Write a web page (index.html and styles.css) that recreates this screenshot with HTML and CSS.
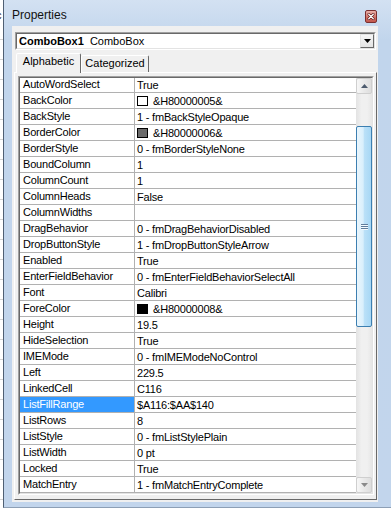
FILE: index.html
```html
<!DOCTYPE html>
<html lang="en">
<head>
    <meta charset="UTF-8">
    <title>Properties</title>
    <link rel="stylesheet" href="styles.css">
</head>
<body>
    <div class="desktop">
        <div class="sheet"><span class="sheet-char">c</span></div>

        <div class="window">
            <div class="titlebar">
                <span class="title">Properties</span>
                <span class="close">
                    <svg width="11" height="11" viewBox="0 0 11 11">
                        <path d="M3 3 L8 8 M8 3 L3 8" stroke="#5a1b1b" stroke-width="2.8" stroke-linecap="round"/>
                        <path d="M3 3 L8 8 M8 3 L3 8" stroke="#fff" stroke-width="1.4" stroke-linecap="round"/>
                    </svg>
                </span>
            </div>

            <div class="client">
                <div class="combo">
                    <div class="combo-field">
                        <span class="combo-text"><b>ComboBox1</b>&nbsp; ComboBox</span>
                        <span class="combo-btn">
                            <svg width="7" height="4" viewBox="0 0 7 4"><path d="M0 0 H7 L3.5 4 Z" fill="#000"/></svg>
                        </span>
                    </div>
                </div>

                <div class="tabs">
                    <div class="tab active">Alphabetic</div>
                    <div class="tab">Categorized</div>
                </div>

                <div class="tab-page">
                    <div class="grid">
                        <div class="grid-inner">
                            <div class="rows">
                                <div class="row-list">
                                    <div class="row"><div class="name">AutoWordSelect</div><div class="value">True</div></div>
                                    <div class="row"><div class="name">BackColor</div><div class="value"><span class="swatch swatch-white"></span>&amp;H80000005&amp;</div></div>
                                    <div class="row"><div class="name">BackStyle</div><div class="value">1 - fmBackStyleOpaque</div></div>
                                    <div class="row"><div class="name">BorderColor</div><div class="value"><span class="swatch swatch-gray"></span>&amp;H80000006&amp;</div></div>
                                    <div class="row"><div class="name">BorderStyle</div><div class="value">0 - fmBorderStyleNone</div></div>
                                    <div class="row"><div class="name">BoundColumn</div><div class="value">1</div></div>
                                    <div class="row"><div class="name">ColumnCount</div><div class="value">1</div></div>
                                    <div class="row"><div class="name">ColumnHeads</div><div class="value">False</div></div>
                                    <div class="row"><div class="name">ColumnWidths</div><div class="value"></div></div>
                                    <div class="row"><div class="name">DragBehavior</div><div class="value">0 - fmDragBehaviorDisabled</div></div>
                                    <div class="row"><div class="name">DropButtonStyle</div><div class="value">1 - fmDropButtonStyleArrow</div></div>
                                    <div class="row"><div class="name">Enabled</div><div class="value">True</div></div>
                                    <div class="row"><div class="name">EnterFieldBehavior</div><div class="value">0 - fmEnterFieldBehaviorSelectAll</div></div>
                                    <div class="row"><div class="name">Font</div><div class="value">Calibri</div></div>
                                    <div class="row"><div class="name">ForeColor</div><div class="value"><span class="swatch swatch-black"></span>&amp;H80000008&amp;</div></div>
                                    <div class="row"><div class="name">Height</div><div class="value">19.5</div></div>
                                    <div class="row"><div class="name">HideSelection</div><div class="value">True</div></div>
                                    <div class="row"><div class="name">IMEMode</div><div class="value">0 - fmIMEModeNoControl</div></div>
                                    <div class="row"><div class="name">Left</div><div class="value">229.5</div></div>
                                    <div class="row"><div class="name">LinkedCell</div><div class="value">C116</div></div>
                                    <div class="row"><div class="name selected">ListFillRange</div><div class="value">$A116:$AA$140</div></div>
                                    <div class="row"><div class="name">ListRows</div><div class="value">8</div></div>
                                    <div class="row"><div class="name">ListStyle</div><div class="value">0 - fmListStylePlain</div></div>
                                    <div class="row"><div class="name">ListWidth</div><div class="value">0 pt</div></div>
                                    <div class="row"><div class="name">Locked</div><div class="value">True</div></div>
                                    <div class="row"><div class="name">MatchEntry</div><div class="value">1 - fmMatchEntryComplete</div></div>
                                </div>
                            </div>

                            <div class="scrollbar">
                                <div class="sb-btn">
                                    <svg width="7" height="4" viewBox="0 0 7 4"><path d="M0 4 L3.5 0 L7 4 Z" fill="#4d5b6e"/></svg>
                                </div>
                                <div class="sb-gap"></div>
                                <div class="sb-thumb">
                                    <svg width="7" height="6" viewBox="0 0 7 6">
                                        <path d="M0 0.5 H7 M0 2.5 H7 M0 4.5 H7" stroke="#5f7d9c" stroke-width="1"/>
                                        <path d="M0 1.5 H7 M0 3.5 H7 M0 5.5 H7" stroke="#f4fbff" stroke-width="1"/>
                                    </svg>
                                </div>
                                <div class="sb-track"></div>
                                <div class="sb-btn">
                                    <svg width="7" height="4" viewBox="0 0 7 4"><path d="M0 0 H7 L3.5 4 Z" fill="#8a8a8a"/></svg>
                                </div>
                            </div>
                        </div>
                    </div>
                </div>
            </div>
        </div>
    </div>
</body>
</html>
```

FILE: styles.css
```css
/* Ventana de propiedades (estilo Windows 7 básico) */
:root {
    --frame-color: #c2d5ec;
    --face-color: #f0f0f0;
    --shadow-color: #a0a0a0;
    --dark-shadow: #696969;
    --light-color: #e3e3e3;
    --grid-line: #b1b1b1;
    --select-color: #3399ff;
}

* {
    margin: 0;
    padding: 0;
    box-sizing: border-box;
}

body {
    width: 391px;
    height: 512px;
    overflow: hidden;
    background-color: #ffffff;
    color: #000;
    font-family: "Liberation Sans", Arial, sans-serif;
    font-size: 11px;
}

.desktop {
    display: flex;
    height: 508px;
}

/* trozo de la hoja de Excel detrás */
.sheet {
    width: 3px;
    flex: none;
    overflow: hidden;
    background: repeating-linear-gradient(to bottom, #fff 0, #fff 19px, #d4d4d4 19px, #d4d4d4 20px);
    line-height: 30px;
}

.sheet-char {
    display: block;
    margin-left: -4px;
    background-color: #fff;
    line-height: 24px;
    padding-top: 3px;
}

.window {
    flex: 1;
    display: flex;
    flex-direction: column;
    border-left: 1px solid #4f5f73;
    border-bottom: 1px solid #8d9fb5;
    background: linear-gradient(#d3e1f2, #c1d5ec 40px, var(--frame-color));
    padding: 0 13px 5px 8px;
}

.titlebar {
    height: 26px;
    display: flex;
    justify-content: space-between;
    align-items: flex-start;
}

.title {
    font-size: 12px;
    line-height: 22px;
    padding-top: 4px;
    color: #111;
}

.close {
    width: 12px;
    height: 13px;
    margin-top: 10px;
    margin-right: 1px;
    border: 1px solid #7a2f2f;
    border-radius: 2px;
    background: linear-gradient(#eab1aa, #cf6d63 60%, #c4574d);
    display: flex;
    align-items: center;
    justify-content: center;
}

.client {
    flex: 1;
    display: flex;
    flex-direction: column;
    background-color: var(--face-color);
}

/* selector de objeto */
.combo {
    height: 18px;
    margin: 6px 2px 0 3px;
    border: 1px solid;
    border-color: var(--shadow-color) #fff #fff var(--shadow-color);
    background-color: #fff;
}

.combo-field {
    height: 100%;
    display: flex;
    align-items: stretch;
    border: 1px solid;
    border-color: var(--dark-shadow) var(--light-color) var(--light-color) var(--dark-shadow);
}

.combo-text {
    flex: 1;
    padding-left: 2px;
    line-height: 14px;
    white-space: nowrap;
}

.combo-btn {
    width: 14px;
    display: flex;
    align-items: center;
    justify-content: center;
    border: 1px solid;
    border-color: var(--light-color) var(--dark-shadow) var(--dark-shadow) var(--light-color);
    background: linear-gradient(#f6f6f6, #e4e4e4);
}

/* pestañas */
.tabs {
    height: 20px;
    margin-top: 3px;
    padding-left: 4px;
    display: flex;
    align-items: flex-end;
}

.tab {
    width: 68px;
    height: 17px;
    margin-bottom: 1px;
    border: 1px solid;
    border-bottom: none;
    border-color: #fff var(--dark-shadow) transparent #fff;
    border-radius: 2px 2px 0 0;
    line-height: 15px;
    text-align: center;
    background-color: var(--face-color);
}

.tab.active {
    position: relative;
    z-index: 1;
    width: 65px;
    height: 20px;
    margin-bottom: 0;
}

.tab-page {
    height: 428px;
    margin: -1px 1px 0 2px;
    border: 1px solid;
    border-color: #fff var(--dark-shadow) var(--dark-shadow) #fff;
}

.grid {
    height: 419px;
    margin: 3px 2px 4px 3px;
    border: 1px solid;
    border-color: var(--shadow-color) #fff #fff var(--shadow-color);
}

.grid-inner {
    height: 100%;
    display: flex;
    border: 1px solid;
    border-color: var(--dark-shadow) var(--light-color) var(--light-color) var(--dark-shadow);
    background-color: #fff;
}

.rows {
    flex: 1;
    overflow: hidden;
}

.row-list {
    margin-top: -1px;
}

.row {
    height: 16px;
    display: grid;
    grid-template-columns: 115px 1fr;
    border-bottom: 1px solid var(--grid-line);
    white-space: nowrap;
    letter-spacing: -0.2px;
}

.name {
    padding-left: 3px;
    line-height: 15px;
    border-right: 1px solid var(--grid-line);
    overflow: hidden;
}

.name.selected {
    background-color: var(--select-color);
    color: #fff;
}

.value {
    padding-left: 2px;
    display: flex;
    align-items: center;
    overflow: hidden;
}

.swatch {
    width: 11px;
    height: 10px;
    flex: none;
    margin-right: 5px;
    border: 1px solid #000;
}

.swatch-white { background-color: #fff; }
.swatch-gray { background-color: #6a6a6a; }
.swatch-black { background-color: #000; }

/* barra de desplazamiento */
.scrollbar {
    width: 16px;
    flex: none;
    display: flex;
    flex-direction: column;
    background: linear-gradient(to right, #e3e3e3, #f0f0f0 35%, #f0f0f0 70%, #e6e6e6);
}

.sb-btn {
    height: 16px;
    flex: none;
    display: flex;
    align-items: center;
    justify-content: center;
    border: 1px solid #cfcfcf;
    border-radius: 2px;
    background: linear-gradient(to right, #f7f7f7, #e9e9e9 50%, #dedede);
}

.sb-gap {
    height: 32px;
    flex: none;
}

.sb-thumb {
    height: 201px;
    flex: none;
    display: flex;
    align-items: center;
    justify-content: center;
    border: 1px solid #3c7fb1;
    border-radius: 2px;
    background: linear-gradient(to right, #eaf6fd, #d9effc 45%, #bce1f8 50%, #a7d7f5);
}

.sb-track {
    flex: 1;
}
```
